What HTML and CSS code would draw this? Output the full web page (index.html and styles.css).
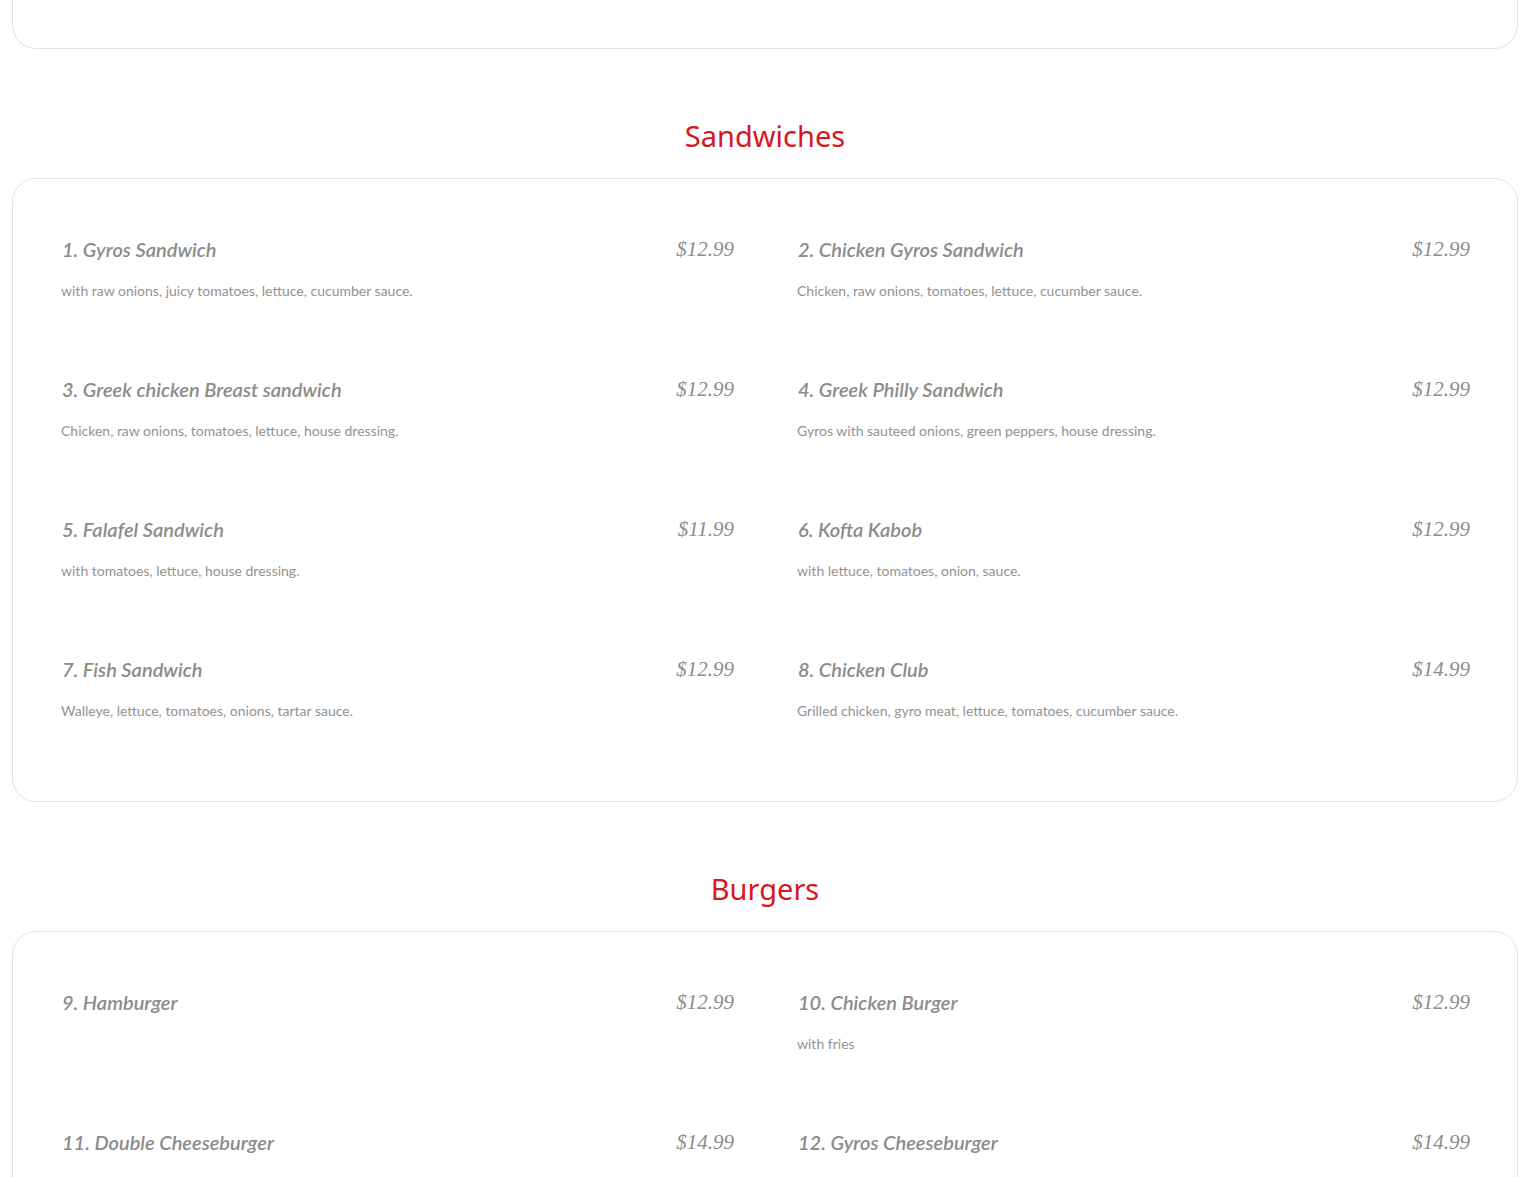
FILE: index.html
```html
<!DOCTYPE html>
<html lang="en">
<head>
    <meta charset="UTF-8">
    <meta name="viewport" content="width=device-width, initial-scale=1.0">
    <title>Menu</title>
    <link rel="stylesheet" href="styles.css">
</head>
<body>
    <div class="menu-card card-tail"></div>

    <h2 class="section-title">Sandwiches</h2>
    <div class="menu-card">
        <div class="menu-grid">
            <div class="item">
                <div class="item-head"><span class="name">1. Gyros Sandwich</span><span class="price">$12.99</span></div>
                <p class="desc">with raw onions, juicy tomatoes, lettuce, cucumber sauce.</p>
            </div>
            <div class="item">
                <div class="item-head"><span class="name">2. Chicken Gyros Sandwich</span><span class="price">$12.99</span></div>
                <p class="desc">Chicken, raw onions, tomatoes, lettuce, cucumber sauce.</p>
            </div>
            <div class="item">
                <div class="item-head"><span class="name">3. Greek chicken Breast sandwich</span><span class="price">$12.99</span></div>
                <p class="desc">Chicken, raw onions, tomatoes, lettuce, house dressing.</p>
            </div>
            <div class="item">
                <div class="item-head"><span class="name">4. Greek Philly Sandwich</span><span class="price">$12.99</span></div>
                <p class="desc">Gyros with sauteed onions, green peppers, house dressing.</p>
            </div>
            <div class="item">
                <div class="item-head"><span class="name">5. Falafel Sandwich</span><span class="price">$11.99</span></div>
                <p class="desc">with tomatoes, lettuce, house dressing.</p>
            </div>
            <div class="item">
                <div class="item-head"><span class="name">6. Kofta Kabob</span><span class="price">$12.99</span></div>
                <p class="desc">with lettuce, tomatoes, onion, sauce.</p>
            </div>
            <div class="item">
                <div class="item-head"><span class="name">7. Fish Sandwich</span><span class="price">$12.99</span></div>
                <p class="desc">Walleye, lettuce, tomatoes, onions, tartar sauce.</p>
            </div>
            <div class="item">
                <div class="item-head"><span class="name">8. Chicken Club</span><span class="price">$14.99</span></div>
                <p class="desc">Grilled chicken, gyro meat, lettuce, tomatoes, cucumber sauce.</p>
            </div>
        </div>
    </div>

    <h2 class="section-title">Burgers</h2>
    <div class="menu-card">
        <div class="menu-grid">
            <div class="item">
                <div class="item-head"><span class="name">9. Hamburger</span><span class="price">$12.99</span></div>
                <p class="desc"></p>
            </div>
            <div class="item">
                <div class="item-head"><span class="name">10. Chicken Burger</span><span class="price">$12.99</span></div>
                <p class="desc">with fries</p>
            </div>
            <div class="item">
                <div class="item-head"><span class="name">11. Double Cheeseburger</span><span class="price">$14.99</span></div>
                <p class="desc">with fries</p>
            </div>
            <div class="item">
                <div class="item-head"><span class="name">12. Gyros Cheeseburger</span><span class="price">$14.99</span></div>
                <p class="desc">with fries</p>
            </div>
        </div>
    </div>
</body>
</html>
```

FILE: styles.css
```css
body {
    margin: 0;
    padding: 0 12px 40px;
    background-color: #fff;
    font-family: 'Lato', sans-serif;
}
.menu-card {
    border: 1px solid #e3e3e3;
    border-radius: 24px;
    padding: 56px 47px 80px 48px;
}
.card-tail {
    height: 48px;
    padding: 0;
    border-top: none;
    border-radius: 0 0 24px 24px;
}
.section-title {
    margin: 0;
    padding: 62px 0 17px;
    text-align: center;
    color: #d9161d;
    font-family: 'Noto Sans', sans-serif;
    font-weight: 400;
    font-size: 29px;
    line-height: 50px;
}
.menu-grid {
    display: grid;
    grid-template-columns: 1fr 1fr;
    column-gap: 63px;
    row-gap: 74px;
}
.item {
    height: 66px;
}
.item-head {
    display: flex;
    justify-content: space-between;
    align-items: center;
    height: 28px;
    padding-left: 1px;
}
.name {
    font-family: 'Lato', sans-serif;
    font-style: italic;
    font-weight: 600;
    font-size: 20px;
    line-height: 28px;
    color: #8c8c8c;
}
.price {
    font-family: 'Liberation Serif', serif;
    font-style: italic;
    font-size: 21px;
    line-height: 30px;
    color: #8c8c8c;
}
.desc {
    margin: 18px 0 0;
    font-size: 14px;
    line-height: 20px;
    color: #939393;
}
```
